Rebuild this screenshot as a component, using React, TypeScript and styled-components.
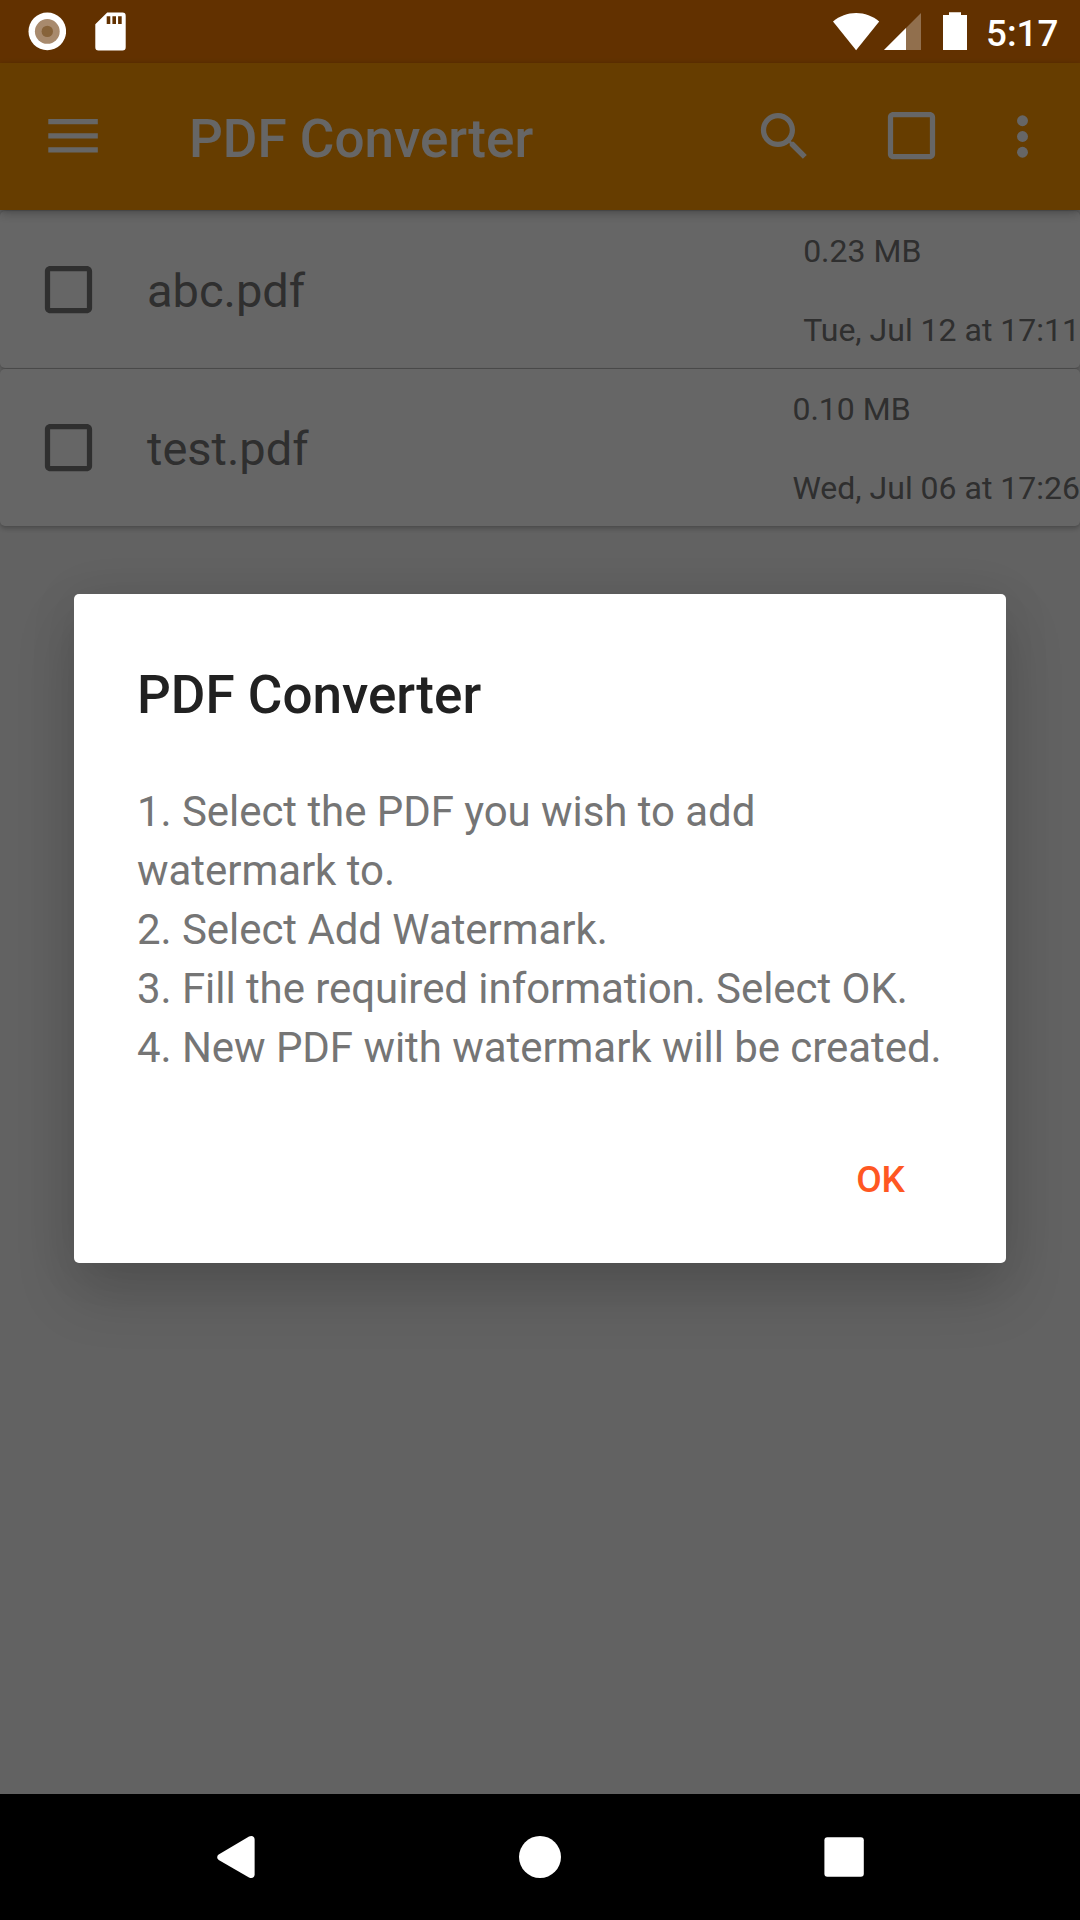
import React from "react";
import styled, { createGlobalStyle } from "styled-components";

const GlobalStyle = createGlobalStyle`
  *, *::before, *::after { box-sizing: border-box; }
  body { margin: 0; background: #000; }
  svg { display: block; flex: none; }
`;

const Screen = styled.div`
  position: relative;
  display: flex;
  flex-direction: column;
  width: 1080px;
  height: 1920px;
  overflow: hidden;
  font-family: Roboto, "Noto Sans", sans-serif;
  background: #f5f5f5;
`;

const StatusBar = styled.header`
  display: flex;
  align-items: flex-start;
  justify-content: space-between;
  flex: none;
  height: 63px;
  padding: 12px 21px 0 28px;
  background: #f57c00;

  /* System icons stay bright above the dimmed window. */
  > * {
    position: relative;
    z-index: 3;
  }
`;

const StatusGroup = styled.div`
  display: flex;
`;

const StatusSlot = styled.span<{ $before?: number }>`
  display: block;
  margin-left: ${(p) => p.$before ?? 0}px;
`;

const Clock = styled.time`
  display: block;
  width: 73px;
  margin-left: 19px;
  color: #fff;
  font-size: 36.75px;
  font-weight: 500;
  line-height: 43px;
  white-space: nowrap;
`;

const Toolbar = styled.nav`
  position: relative;
  z-index: 1;
  display: flex;
  align-items: center;
  flex: none;
  height: 147px;
  padding: 0 26px 0 42px;
  background: #ff9800;
  color: #fff;
  box-shadow: 0 4px 10px rgba(0, 0, 0, 0.22), 0 1px 4px rgba(0, 0, 0, 0.14);
`;

const ToolbarTitle = styled.h1`
  flex: 1;
  margin: 0 0 0 84px;
  padding-top: 5px;
  font-size: 53px;
  font-weight: 500;
  line-height: 62px;
`;

const ToolbarActions = styled.div`
  display: flex;
  margin-right: 16px;
`;

const IconButton = styled.button<{ $width?: number; $lift?: number }>`
  display: flex;
  align-items: center;
  justify-content: center;
  width: ${(p) => p.$width ?? 127}px;
  height: 127px;
  padding: 0 0 ${(p) => p.$lift ?? 0}px;
  border: 0;
  background: none;
  color: inherit;
`;

const FileList = styled.ul`
  display: flex;
  flex-direction: column;
  flex: 1;
  gap: 1px;
  margin: 0;
  padding: 1px 0 0;
  list-style: none;
`;

const FileCard = styled.li`
  display: flex;
  align-items: center;
  height: 157px;
  padding: 0 0 1px 36.5px;
  border-radius: 5px;
  background: #fff;
  color: #757575;
  box-shadow: 0 3px 5px rgba(0, 0, 0, 0.2), 0 0 3px rgba(0, 0, 0, 0.12);
`;

const FileName = styled.span`
  flex: 1;
  padding: 3px 0 0 47.5px;
  font-size: 47px;
  line-height: 56px;
`;

const FileMeta = styled.div`
  display: flex;
  flex-direction: column;
  gap: 42px;
  padding-top: 3px;
  font-size: 32px;
  line-height: 37px;
  white-space: nowrap;
`;

const NavBar = styled.footer`
  position: relative;
  z-index: 2;
  display: flex;
  align-items: center;
  justify-content: space-between;
  flex: none;
  height: 126px;
  padding: 0 215px;
  background: #000;
  color: #fff;
`;

const Scrim = styled.div`
  position: absolute;
  inset: 0 0 126px;
  z-index: 2;
  display: flex;
  flex-direction: column;
  align-items: center;
  padding-top: 594px;
  background: rgba(0, 0, 0, 0.6);
`;

const Dialog = styled.section`
  display: flex;
  flex-direction: column;
  width: 932px;
  height: 669px;
  padding: 70px 63px 0;
  border-radius: 5px;
  background: #fff;
  box-shadow: 0 30px 60px rgba(0, 0, 0, 0.16), 0 4px 50px rgba(0, 0, 0, 0.08);
`;

const DialogTitle = styled.h2`
  margin: 0;
  color: #212121;
  font-size: 53px;
  font-weight: 500;
  line-height: 62px;
`;

const DialogMessage = styled.p`
  margin: 56px -10px 0 0;
  color: #757575;
  font-size: 42px;
  line-height: 59px;
  letter-spacing: -0.055px;
  white-space: pre-line;
`;

const DialogActions = styled.div`
  display: flex;
  justify-content: flex-end;
  padding: 56px 12px 0 0;
`;

const DialogButton = styled.button`
  height: 94px;
  padding: 0 26px;
  border: 0;
  background: none;
  color: #ff5722;
  font-family: inherit;
  font-size: 37px;
  font-weight: 500;
  line-height: 44px;
`;

const RecordIcon = () => (
  <svg width="38" height="39" viewBox="0 0 38 39">
    <circle cx="19.3" cy="19.4" r="18.8" fill="#fff" />
    <circle cx="19.3" cy="19.4" r="12.4" fill="#a88a6d" />
    <circle cx="19.3" cy="19.4" r="5.7" fill="#87633a" />
  </svg>
);

const SdCardIcon = () => (
  <svg width="32" height="39" viewBox="0 0 32 39">
    <path
      fill="#fff"
      fillRule="evenodd"
      d="M12.2.5H27.500a3.200 3.200 0 0 1 3.200 3.200V35.300a3.200 3.200 0 0 1-3.200 3.200H3.500a3.200 3.200 0 0 1-3.200-3.200V12.300ZM11.700 4.300V12H15.300V4.300ZM17.400 4.300V12H21V4.300ZM23.100 4.300V12H26.700V4.300Z"
    />
  </svg>
);

const WifiIcon = () => (
  <svg width="47" height="39" viewBox="0 0 47 39">
    <path fill="#fff" d="M0 9.500C6.500 4 14.500 1 23.100 1S39.700 4 46.200 9.500L23.100 38.300Z" />
  </svg>
);

const SignalIcon = () => (
  <svg width="37" height="39" viewBox="0 0 37 39">
    <path fill="#fff" fillOpacity="0.3" d="M37 1V38H0Z" />
    <path fill="#fff" d="M22 16V38H0Z" />
  </svg>
);

const BatteryIcon = () => (
  <svg width="24" height="39" viewBox="0 0 24 39">
    <path fill="#fff" d="M6 .2H18V3H24V38H0V3H6Z" />
  </svg>
);

const MenuIcon = () => (
  <svg width="63" height="63" viewBox="0 0 63 63" fill="currentColor">
    <path d="M6.300 14H55.800V19.200H6.300ZM6.300 28.200H55.800V33.400H6.300ZM6.300 42.300H55.800V47.500H6.300Z" />
  </svg>
);

const SearchIcon = () => (
  <svg width="63" height="63" viewBox="0 0 24 24" fill="currentColor">
    <path d="M15.500 14h-.790l-.280-.270C15.410 12.590 16 11.110 16 9.500 16 5.910 13.090 3 9.500 3S3 5.910 3 9.500 5.910 16 9.500 16c1.610 0 3.090-.590 4.230-1.570l.270.280v.790l5 4.990L20.490 19l-4.990-5zm-6 0C7.010 14 5 11.990 5 9.500S7.010 5 9.500 5 14 7.010 14 9.500 11.990 14 9.500 14z" />
  </svg>
);

const CheckboxIcon = () => (
  <svg width="63" height="63" viewBox="0 0 24 24" fill="currentColor">
    <path d="M19 5v14H5V5h14m0-2H5c-1.100 0-2 .900-2 2v14c0 1.100.900 2 2 2h14c1.100 0 2-.900 2-2V5c0-1.100-.900-2-2-2z" />
  </svg>
);

const MoreIcon = () => (
  <svg width="63" height="63" viewBox="0 0 24 24" fill="currentColor">
    <circle cx="12" cy="6" r="2.080" />
    <circle cx="12" cy="12" r="2.080" />
    <circle cx="12" cy="18" r="2.080" />
  </svg>
);

const BackIcon = () => (
  <svg width="42" height="42" viewBox="0 0 42 42" fill="currentColor">
    <path d="M3.700 18.600 34 .500C37 -.800 39.600 .500 39.600 3.500V38.500C39.600 41.500 37 42.800 34 41.400L3.700 24C1.700 22.700 1.700 20 3.700 18.600Z" />
  </svg>
);

const HomeIcon = () => (
  <svg width="42" height="42" viewBox="0 0 42 42" fill="currentColor">
    <circle cx="21" cy="21" r="21" />
  </svg>
);

const RecentsIcon = () => (
  <svg width="42" height="42" viewBox="0 0 42 42" fill="currentColor">
    <rect x="1.400" y="1.300" width="39.400" height="39.400" rx="3" />
  </svg>
);

const files = [
  { name: "abc.pdf", size: "0.23 MB", date: "Tue, Jul 12 at 17:11" },
  { name: "test.pdf", size: "0.10 MB", date: "Wed, Jul 06 at 17:26" },
];

const message = [
  "1. Select the PDF you wish to add watermark to.",
  "2. Select Add Watermark.",
  "3. Fill the required information. Select OK.",
  "4. New PDF with watermark will be created.",
].join("\n");

export default function App() {
  return (
    <Screen>
      <GlobalStyle />
      <StatusBar>
        <StatusGroup>
          <StatusSlot>
            <RecordIcon />
          </StatusSlot>
          <StatusSlot $before={29}>
            <SdCardIcon />
          </StatusSlot>
        </StatusGroup>
        <StatusGroup>
          <StatusSlot>
            <WifiIcon />
          </StatusSlot>
          <StatusSlot $before={4}>
            <SignalIcon />
          </StatusSlot>
          <StatusSlot $before={22}>
            <BatteryIcon />
          </StatusSlot>
          <Clock>5:17</Clock>
        </StatusGroup>
      </StatusBar>
      <Toolbar>
        <IconButton $width={63} aria-label="Open menu">
          <MenuIcon />
        </IconButton>
        <ToolbarTitle>PDF Converter</ToolbarTitle>
        <ToolbarActions>
          <IconButton aria-label="Search">
            <SearchIcon />
          </IconButton>
          <IconButton $lift={2} aria-label="Select all">
            <CheckboxIcon />
          </IconButton>
        </ToolbarActions>
        <IconButton $width={63} aria-label="More options">
          <MoreIcon />
        </IconButton>
      </Toolbar>
      <FileList>
        {files.map((file) => (
          <FileCard key={file.name}>
            <CheckboxIcon />
            <FileName>{file.name}</FileName>
            <FileMeta>
              <span>{file.size}</span>
              <span>{file.date}</span>
            </FileMeta>
          </FileCard>
        ))}
      </FileList>
      <NavBar>
        <BackIcon />
        <HomeIcon />
        <RecentsIcon />
      </NavBar>
      <Scrim>
        <Dialog role="dialog" aria-modal="true">
          <DialogTitle>PDF Converter</DialogTitle>
          <DialogMessage>{message}</DialogMessage>
          <DialogActions>
            <DialogButton>OK</DialogButton>
          </DialogActions>
        </Dialog>
      </Scrim>
    </Screen>
  );
}
